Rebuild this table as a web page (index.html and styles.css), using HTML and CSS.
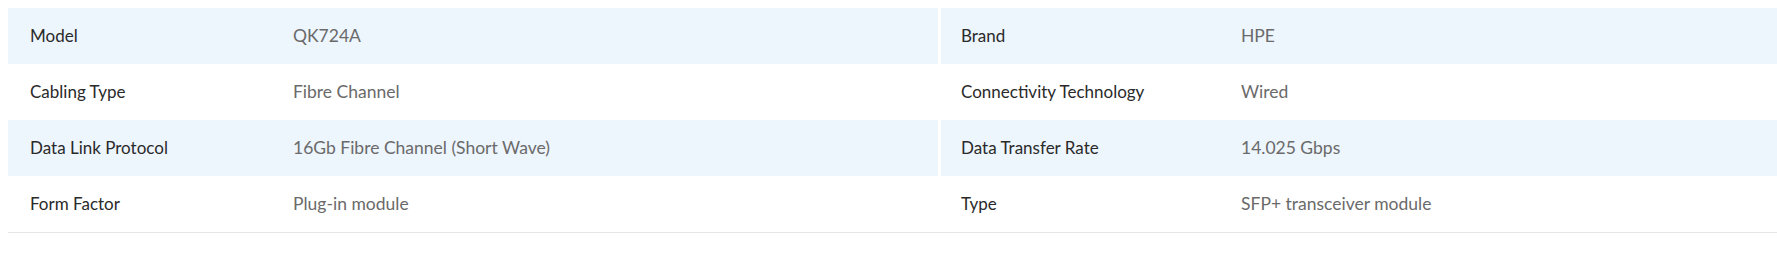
FILE: index.html
```html
<!DOCTYPE html>
<html lang="en">
<head>
<meta charset="utf-8">
<title>Specifications</title>
<link rel="stylesheet" href="styles.css">
</head>
<body>
<div class="specs">
  <div class="item left shade"><span class="label">Model</span><span class="value">QK724A</span></div>
  <div class="item right shade"><span class="label">Brand</span><span class="value">HPE</span></div>
  <div class="item left"><span class="label">Cabling Type</span><span class="value">Fibre Channel</span></div>
  <div class="item right"><span class="label">Connectivity Technology</span><span class="value">Wired</span></div>
  <div class="item left shade"><span class="label">Data Link Protocol</span><span class="value">16Gb Fibre Channel (Short Wave)</span></div>
  <div class="item right shade"><span class="label">Data Transfer Rate</span><span class="value">14.025 Gbps</span></div>
  <div class="item left"><span class="label">Form Factor</span><span class="value">Plug-in module</span></div>
  <div class="item right"><span class="label">Type</span><span class="value">SFP+ transceiver module</span></div>
</div>
</body>
</html>
```

FILE: styles.css
```css
html, body {
  background: #ffffff;
}
body {
  margin: 8px 0 0 8px;
  font-family: "Lato", "Noto Sans", sans-serif;
}
.specs {
  display: grid;
  grid-template-columns: 930px 1fr;
  column-gap: 3px;
  border-bottom: 1px solid #e6e6e6;
}
.item {
  display: grid;
  align-items: center;
  height: 56px;
  box-sizing: border-box;
  padding-bottom: 2px;
}
.item.left {
  grid-template-columns: 263px 1fr;
  padding-left: 22px;
}
.item.right {
  grid-template-columns: 280px 1fr;
  padding-left: 20px;
}
.shade {
  background: #edf5fd;
}
.label {
  color: #2a2a2a;
  font-size: 17px;
  font-weight: 400;
}
.value {
  color: #6a6a6a;
  font-size: 17.5px;
  font-weight: 400;
}
```
